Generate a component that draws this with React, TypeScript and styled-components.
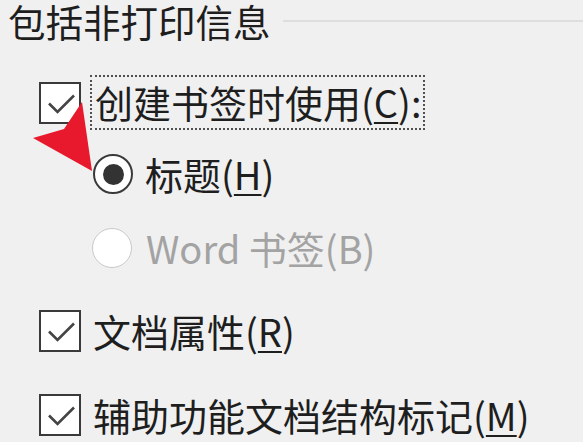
import React from "react";
import styled, { createGlobalStyle } from "styled-components";

const Global = createGlobalStyle`
  html, body { margin: 0; padding: 0; background: #f0f0f0; }
  body {
    width: 583px; height: 442px; overflow: hidden;
    font-family: "Noto Sans CJK SC", "Microsoft YaHei", "Noto Sans", sans-serif;
    color: #1e1e1e;
  }
`;

const Panel = styled.div`
  position: relative;
  display: flex;
  flex-direction: column;
  padding: 0 0 0 8px;
  height: 442px;
  box-sizing: border-box;
`;

const Header = styled.div`
  display: flex;
  align-items: center;
  height: 42px;
`;

const HeaderText = styled.span`
  font-size: 37.5px;
  line-height: 42px;
  white-space: nowrap;
`;

const Rule = styled.div`
  flex: 1;
  height: 2px;
  margin-left: 12px;
  background: #dedede;
`;

const Row = styled.div<{ $top: number; $indent: number }>`
  display: flex;
  align-items: center;
  margin-top: ${(p) => p.$top}px;
  padding-left: ${(p) => p.$indent}px;
  min-height: 42px;
`;

const Box = styled.span`
  flex: none;
  width: 38px;
  height: 38px;
  border: 2px solid #3a3a3a;
  background: #fff;
  display: flex;
  align-items: center;
  justify-content: center;
`;

const Radio = styled.span<{ $disabled?: boolean }>`
  flex: none;
  width: ${(p) => (p.$disabled ? 38 : 36)}px;
  height: ${(p) => (p.$disabled ? 38 : 36)}px;
  border-radius: 50%;
  border: ${(p) => (p.$disabled ? "1px solid #c9c9c9" : "2px solid #3a3a3a")};
  background: #fff;
  display: flex;
  align-items: center;
  justify-content: center;
`;

const Dot = styled.span`
  width: 21px;
  height: 21px;
  border-radius: 50%;
  background: #333;
`;

const Label = styled.span<{ $gap: number; $disabled?: boolean; $focus?: boolean }>`
  margin-left: ${(p) => p.$gap}px;
  font-size: 38px;
  line-height: 42px;
  white-space: nowrap;
  color: ${(p) => (p.$disabled ? "#a3a3a3" : "#1e1e1e")};
  ${(p) =>
    p.$focus
      ? `border: 2px dotted #505050; padding: 4px 1px 5px 3px;`
      : ""}
`;

const Key = styled.u`
  text-decoration-thickness: 2px;
  text-underline-offset: 4px;
`;

const Pointer = styled.svg`
  position: absolute;
  left: 0;
  top: 0;
  pointer-events: none;
`;

const Check = () => (
  <svg width="34" height="34" viewBox="0 0 34 34">
    <path d="M6 17.5 L14.5 26 L31 9.5" fill="none" stroke="#444" strokeWidth="2.6" />
  </svg>
);

export default function App() {
  return (
    <>
      <Global />
      <Panel>
        <Header>
          <HeaderText>包括非打印信息</HeaderText>
          <Rule />
        </Header>
        <Row $top={33} $indent={31}>
          <Box><Check /></Box>
          <Label $gap={9} $focus>创建书签时使用(<Key>C</Key>):</Label>
        </Row>
        <Row $top={23} $indent={85}>
          <Radio><Dot /></Radio>
          <Label $gap={12}>标题(<Key>H</Key>)</Label>
        </Row>
        <Row $top={32} $indent={84}>
          <Radio $disabled />
          <Label $gap={14} $disabled>Word 书签(B)</Label>
        </Row>
        <Row $top={41} $indent={31}>
          <Box><Check /></Box>
          <Label $gap={12}>文档属性(<Key>R</Key>)</Label>
        </Row>
        <Row $top={42} $indent={31}>
          <Box><Check /></Box>
          <Label $gap={12}>辅助功能文档结构标记(<Key>M</Key>)</Label>
        </Row>
        <Pointer width="583" height="442" viewBox="0 0 583 442">
          <polygon points="92,171 33,138 64,129 82,102" fill="#e8192c" />
        </Pointer>
      </Panel>
    </>
  );
}
